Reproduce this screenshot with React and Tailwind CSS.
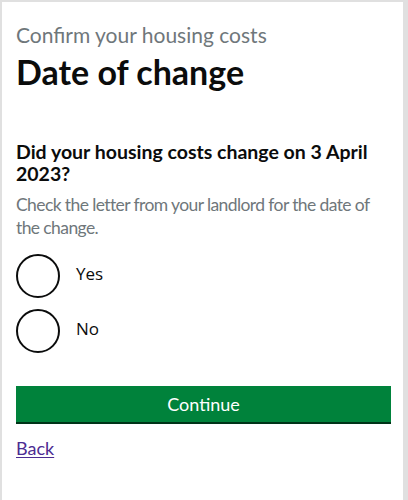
import React from "react";

const options = ["Yes", "No"];

const App = () => {
  return (
    <div
      className="w-[408px] h-[500px] bg-white border-t-2 border-l-2 border-r-[5px] border-[#e0e0e0] pl-[14px] pr-[12px] pt-[20px]"
      style={{ fontFamily: "Lato, Arial, sans-serif" }}
    >
      <p className="text-[21px] leading-[26px] text-[#6f777b]">
        Confirm your housing costs
      </p>
      <h1 className="mt-[4px] text-[34px] leading-[40px] font-bold text-[#0b0c0c]">
        Date of change
      </h1>

      <h2 className="mt-[49px] text-[19.5px] leading-[22px] font-bold text-[#0b0c0c]">
        Did your housing costs change on 3 April 2023?
      </h2>
      <p className="mt-[8px] text-[17.5px] leading-[23px] tracking-[-0.6px] text-[#6f777b]">
        Check the letter from your landlord for the date of the change.
      </p>

      <div className="mt-[15px] flex flex-col gap-[11px]">
        {options.map((opt) => (
          <label key={opt} className="flex items-center gap-[16px]">
            <span className="w-[44px] h-[44px] rounded-full border-2 border-[#0b0c0c] shrink-0" />
            <span
              className="text-[17px] text-[#0b0c0c] -mt-[4px]"
              style={{ fontFamily: '"Open Sans", Arial, sans-serif' }}
            >
              {opt}
            </span>
          </label>
        ))}
      </div>

      <button className="mt-[33px] w-full h-[38px] bg-[#00823b] border-b-2 border-[#003418] text-white text-[18px] leading-[36px]">
        Continue
      </button>

      <a
        href="#"
        className="mt-[11px] inline-block text-[18px] text-[#4c2c92] underline underline-offset-2"
      >
        Back
      </a>
    </div>
  );
};

export default App;
